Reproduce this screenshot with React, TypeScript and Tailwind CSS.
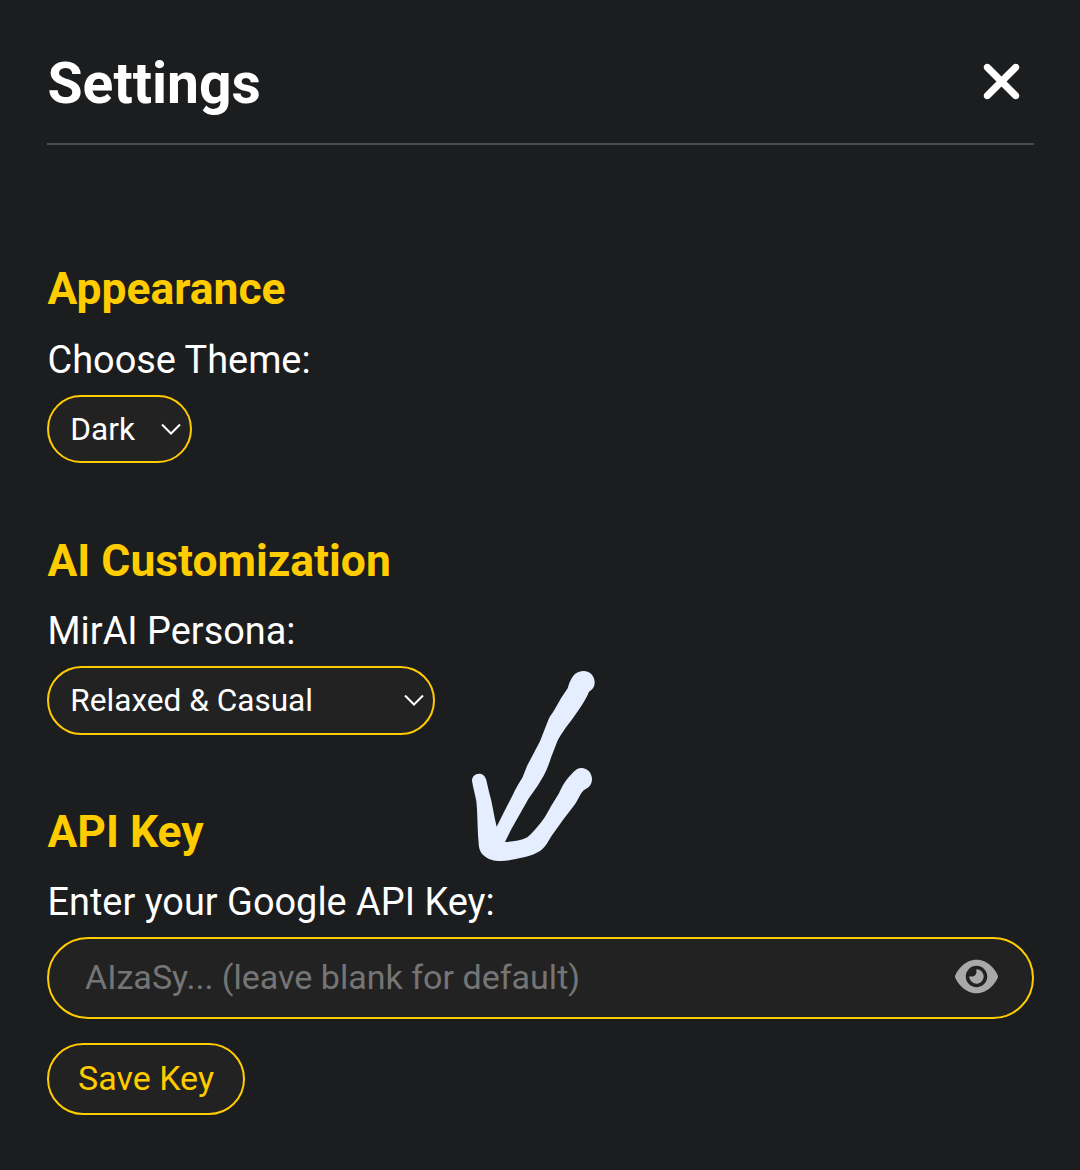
import type { ReactNode } from "react";
import { FaEye, FaXmark } from "react-icons/fa6";

function Section({ title, label, className, children }: { title: string; label: string; className: string; children: ReactNode }) {
  return (
    <section className={`flex flex-col items-start ${className}`}>
      <h2 className="pl-[0.5px] text-[44.4px] leading-[52px] font-bold whitespace-nowrap text-[#ffcc00]">{title}</h2>
      <label className="mt-[21.4px] mb-[12px] pl-[0.5px] text-[37.9px] leading-[46px] whitespace-nowrap text-white">{label}</label>
      {children}
    </section>
  );
}

function Select({ value, className }: { value: string; className: string }) {
  return (
    <button className={`flex items-center justify-between rounded-[35px] border-2 border-[#ffcc00] bg-[#222222] pr-[9px] pl-[21.3px] text-[31.6px] leading-[38px] text-white ${className}`}>
      <span className="whitespace-nowrap">{value}</span>
      <svg className="-mt-px" width="20" height="12" viewBox="0 0 20 12" fill="none" stroke="white" strokeWidth="2">
        <path d="M1 1.5 L10 10.5 L19 1.5" />
      </svg>
    </button>
  );
}

/* Hand-drawn pointer laid over the settings form */
function Arrow() {
  return (
    <svg className="pointer-events-none absolute top-[650px] left-[450px]" width="170" height="230" viewBox="0 0 510 690" fill="#e4eeff">
      <path d="M400 63 C422 63 434 80 434 97 C434 110 429 118 417 125 C410 143 401 157 390 174 L367 207 L347 233 C338 247 328 260 322 274 L304 320 C297 341 291 359 281 377 L263 407 L235 447 L205 500 L183 539 L165 576 C190 575 211 572 232 562 C247 549 260 533 274 516 C287 499 294 486 303 469 L327 430 C337 408 345 394 356 382 C369 368 378 354 394 354 C413 354 426 370 426 387 C426 402 418 412 407 417 C390 427 388 445 375 463 L341 507 L305 557 C291 580 284 596 263 607 C246 617 227 621 207 625 C184 630 170 633 152 633 C131 633 116 629 103 618 C91 608 86 595 86 578 C82 537 83 490 79 454 C75 431 69 413 66 392 C66 380 75 371 87 371 C99 371 106 379 109 391 L117 425 C128 461 131 495 140 530 L162 486 L187 437 C197 415 206 401 217 383 L232 346 L270 274 L294 212 C298 200 305 193 313 180 L333 145 L353 115 C361 88 372 63 400 63 Z" />
    </svg>
  );
}

export default function App() {
  return (
    <main className="relative h-[1170px] w-[1080px] overflow-hidden bg-[#1b1d1e] pr-[46px] pl-[47px] font-['Roboto',sans-serif]">
      <header className="flex h-[145px] items-start justify-between border-b-2 border-[#4d4d4f] pt-[51px] pr-[4px]">
        <h1 className="pl-[0.5px] text-[57px] leading-[66px] font-bold text-white">Settings</h1>
        <button aria-label="Close" className="mt-[2px] text-white">
          <FaXmark size={57} />
        </button>
      </header>

      <Section title="Appearance" label="Choose Theme:" className="mt-[118.2px]">
        <Select value="Dark" className="h-[68px] w-[145px] pt-[2px]" />
      </Section>

      <Section title="AI Customization" label="MirAI Persona:" className="mt-[72.4px]">
        <Select value="Relaxed &amp; Casual" className="h-[69px] w-[388px]" />
      </Section>

      <Section title="API Key" label="Enter your Google API Key:" className="mt-[70.6px]">
        <div className="flex h-[82px] w-full items-center rounded-[41px] border-2 border-[#ffcc00] bg-[#222222] pr-[34px] pb-[2px] pl-[36px]">
          <input
            className="min-w-0 flex-1 bg-transparent text-[34.05px] leading-[42px] text-white outline-none placeholder:text-[#757575]"
            placeholder="AIzaSy... (leave blank for default)"
          />
          <button aria-label="Show key" className="-mt-px text-[#a9a9a9]">
            <FaEye size={43} />
          </button>
        </div>
        <button className="mt-[24px] h-[72px] w-[198px] rounded-[36px] border-2 border-[#ffcc00] bg-[#222222] pb-[2px] text-[34px] leading-[40px] whitespace-nowrap text-[#ffcc00]">
          Save Key
        </button>
      </Section>

      <Arrow />
    </main>
  );
}
